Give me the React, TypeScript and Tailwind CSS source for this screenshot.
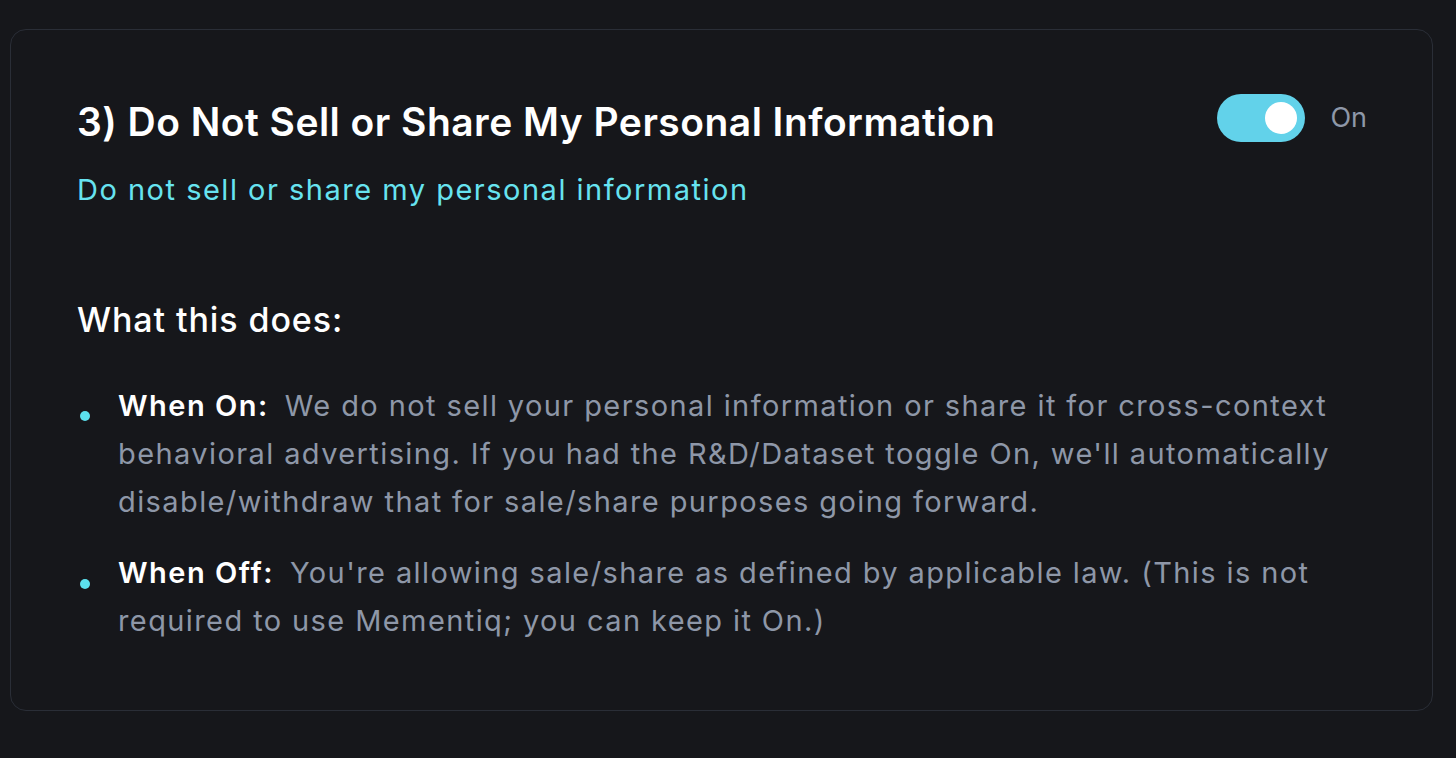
import React from "react";

export default function App() {
  return (
    <div
      className="w-[1456px] h-[758px] bg-[#16171b] pt-[29px] px-[10px]"
      style={{ fontFamily: "Inter, 'Noto Sans', sans-serif" }}
    >
      <div className="w-[1423px] h-[682px] rounded-[16px] border border-[#2a2e37] bg-[#16171b] pl-[66px] pr-[65px] pt-[64px]">
        <div className="flex items-start justify-between">
          <div className="pt-[3.5px]">
            <h2 className="text-[39px] leading-[48px] font-semibold text-white tracking-[0.47px]">
              3) Do Not Sell or Share My Personal Information
            </h2>
            <p className="mt-[24px] text-[29px] leading-[40px] text-[#67e3f0] tracking-[1.5px]">
              Do not sell or share my personal information
            </p>
          </div>
          <div className="flex items-center gap-[25px]">
            <div className="w-[88px] h-[48px] rounded-full bg-[#62d2ea] flex items-center justify-end pr-[8px]">
              <div className="w-[32px] h-[32px] rounded-full bg-white" />
            </div>
            <span className="text-[27px] leading-[48px] text-[#8e97a8]">On</span>
          </div>
        </div>
        <h3 className="mt-[88px] text-[34px] leading-[44px] font-medium text-white tracking-[0.9px]">
          What this does:
        </h3>
        <ul className="mt-[40px] flex flex-col gap-[23px]">
          <li className="flex">
            <span className="w-[41px] shrink-0 flex pt-[29px] pl-[3px]">
              <span className="w-[10px] h-[10px] rounded-full bg-[#5ce1ee]" />
            </span>
            <p className="text-[29px] leading-[48px] text-[#8e97a8] tracking-[1.4px]">
              <span className="font-semibold text-white mr-[16px] tracking-[1.5px]">When On:</span>
              We do not sell your personal information or share it for cross-context behavioral advertising. If you had the R&amp;D/Dataset toggle On, we'll automatically disable/withdraw that for sale/share purposes going forward.
            </p>
          </li>
          <li className="flex">
            <span className="w-[41px] shrink-0 flex pt-[30px] pl-[3px]">
              <span className="w-[10px] h-[10px] rounded-full bg-[#5ce1ee]" />
            </span>
            <p className="text-[29px] leading-[48px] text-[#8e97a8] tracking-[1.4px]">
              <span className="font-semibold text-white mr-[16px] tracking-[1.5px]">When Off:</span>
              You're allowing sale/share as defined by applicable law. (This is not required to use Mementiq; you can keep it On.)
            </p>
          </li>
        </ul>
      </div>
    </div>
  );
}
